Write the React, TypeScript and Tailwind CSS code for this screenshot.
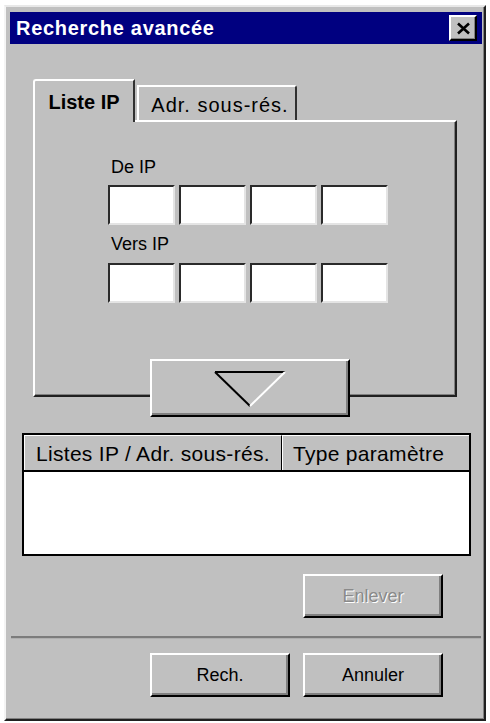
import React from 'react';

const font = { fontFamily: '"Liberation Sans", Arial, sans-serif' };

function IpFields() {
  return (
    <div className="flex gap-[4px]">
      {[0, 1, 2, 3].map((i) => (
        <div
          key={i}
          className="w-[67px] h-[40px] bg-white border-t-2 border-l-2 border-t-[#2a2a2a] border-l-[#2a2a2a] border-r-2 border-b-2 border-r-[#e4e4e4] border-b-[#e4e4e4]"
        />
      ))}
    </div>
  );
}

function Win95Button({ label, disabled }: { label: string; disabled?: boolean }) {
  return (
    <button
      className={
        'w-[140px] h-[44px] flex items-center justify-center bg-[#c0c0c0] border-2 border-t-white border-l-white border-r-black border-b-black shadow-[inset_-2px_-2px_0_#808080] text-[18px] ' +
        (disabled ? 'text-[#8a8a8a] [text-shadow:1px_1px_0_#ffffff]' : 'text-black')
      }
    >
      {label}
    </button>
  );
}

export default function App() {
  return (
    <div className="w-[490px] h-[723px] bg-white pt-[5px] pl-[4px]" style={font}>
      {/* Dialog window */}
      <div className="w-[482px] h-[716px] bg-[#c0c0c0] border-2 border-t-[#e8e8e8] border-l-[#f4f4f4] border-r-[#202020] border-b-[#202020] shadow-[inset_-1px_-1px_0_#808080] flex flex-col">
        {/* Title bar */}
        <div className="mt-[5px] ml-[4px] w-[472px] h-[32px] bg-[#000080] flex items-center justify-between pl-[6px] pr-[5px]">
          <span className="text-white font-bold text-[20px] tracking-[0.7px] leading-none">
            Recherche avancée
          </span>
          <div className="w-[28px] h-[26px] bg-[#c0c0c0] border-2 border-t-white border-l-white border-r-black border-b-black shadow-[inset_-1px_-1px_0_#808080] flex items-center justify-center">
            <svg width="15" height="13" viewBox="0 0 15 13">
              <path d="M2 1.5 L13 11.5 M13 1.5 L2 11.5" stroke="#000" strokeWidth="2.6" />
            </svg>
          </div>
        </div>

        {/* Tabs */}
        <div className="mt-[35px] ml-[27px] flex flex-col">
          <div className="flex items-end h-[41px]">
            <div className="relative z-10 -mb-[2px] w-[102px] h-[43px] bg-[#c0c0c0] border-t-2 border-l-2 border-white border-r-2 border-r-[#303030] rounded-tl-[3px] flex items-center justify-center pt-[1px]">
              <span className="font-bold text-[20px] text-black">Liste IP</span>
            </div>
            <div className="ml-[2px] w-[160px] h-[35px] bg-[#c0c0c0] border-t-2 border-l-2 border-white border-r-2 border-r-[#303030] rounded-tr-[3px] flex items-end justify-center pl-[6px] pb-[3px]">
              <span className="text-[20px] tracking-[1px] text-black leading-[24px]">Adr. sous-rés.</span>
            </div>
          </div>

          {/* Panel */}
          <div className="w-[424px] h-[277px] border-t-2 border-l-2 border-white border-r-2 border-b-2 border-r-[#202020] border-b-[#202020] shadow-[inset_-1px_-1px_0_#808080] flex flex-col pt-[34px]">
            <div className="ml-[76px] text-[18px] leading-[22px] text-black">De IP</div>
            <div className="ml-[73px] mt-[7px]">
              <IpFields />
            </div>
            <div className="ml-[76px] mt-[8px] text-[18px] leading-[22px] text-black">Vers IP</div>
            <div className="ml-[73px] mt-[8px]">
              <IpFields />
            </div>
            <div className="ml-[115px] mt-[56px] relative z-10">
              <button className="w-[200px] h-[58px] bg-[#c0c0c0] border-2 border-t-white border-l-white border-r-black border-b-black shadow-[inset_-2px_-2px_0_#808080] flex items-center justify-center pt-[2px]">
                <svg width="74" height="38" viewBox="0 0 74 38">
                  <path d="M2 2 L72 2" stroke="#000" strokeWidth="2" />
                  <path d="M2 2 L37 36" stroke="#000" strokeWidth="2" />
                  <path d="M72 2 L37 36" stroke="#fff" strokeWidth="2" />
                </svg>
              </button>
            </div>
          </div>
        </div>

        {/* List view */}
        <div className="mt-[36px] ml-[16px] w-[449px] h-[123px] border-2 border-black bg-white flex flex-col">
          <div className="h-[37px] flex bg-[#c0c0c0] border-b-2 border-black">
            <div className="w-[258px] h-full border-t border-l border-white border-r border-r-black flex items-center pl-[11px]">
              <span className="text-[21px] tracking-[0.3px] text-black leading-none">Listes IP / Adr. sous-rés.</span>
            </div>
            <div className="flex-1 h-full border-t border-l border-white flex items-center pl-[10px]">
              <span className="text-[21px] tracking-[0.3px] text-black leading-none">Type paramètre</span>
            </div>
          </div>
        </div>

        {/* Remove button */}
        <div className="mt-[18px] ml-[297px]">
          <Win95Button label="Enlever" disabled />
        </div>

        {/* Separator */}
        <div className="mt-[18px] ml-[5px] w-[470px] h-[3px] bg-[#7c7c7c] border-b border-[#b0b0b0]" />

        {/* Action buttons */}
        <div className="mt-[14px] ml-[144px] flex gap-[13px]">
          <Win95Button label="Rech." />
          <Win95Button label="Annuler" />
        </div>
      </div>
    </div>
  );
}
